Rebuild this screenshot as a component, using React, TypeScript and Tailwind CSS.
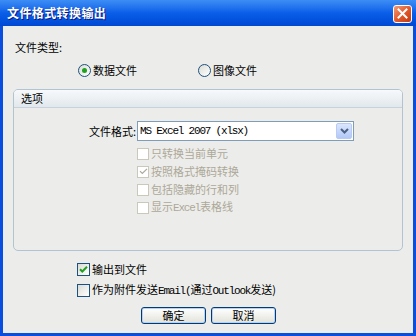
import React from "react";

const cjk = { fontFamily: '"Noto Sans CJK SC", "Noto Sans", sans-serif' };
const mono = { fontFamily: '"Liberation Mono", "Noto Sans CJK SC", monospace' };

function Radio({ checked, label }: { checked?: boolean; label: string }) {
  return (
    <div className="flex items-center gap-[2px]">
      <div className="w-[13px] h-[13px] rounded-full border border-[#1c5180] bg-gradient-to-br from-[#dcdcd5] to-white flex items-center justify-center">
        {checked && <div className="w-[5px] h-[5px] rounded-full bg-[#21a121]" />}
      </div>
      <span className="text-[11px] leading-[13px] text-black">{label}</span>
    </div>
  );
}

function Check({
  checked,
  disabled,
  children,
}: {
  checked?: boolean;
  disabled?: boolean;
  children: React.ReactNode;
}) {
  return (
    <div className="flex items-center gap-[2px] h-[13px]">
      <div
        className={
          disabled
            ? "w-[12px] h-[12px] border border-[#cac8bb] bg-white flex items-center justify-center"
            : "w-[13px] h-[13px] border border-[#1c5180] bg-gradient-to-br from-[#dcdcd5] to-white flex items-center justify-center"
        }
      >
        {checked && (
          <svg width="9" height="9" viewBox="0 0 9 9">
            <path
              d="M1 4.2 L3.3 6.5 L8 1.8"
              fill="none"
              stroke={disabled ? "#aca899" : "#21a121"}
              strokeWidth={disabled ? 1.2 : 2}
            />
          </svg>
        )}
      </div>
      <span className={disabled ? "text-[11px] leading-[13px] text-[#aca899]" : "text-[11px] leading-[13px] text-black"}>
        {children}
      </span>
    </div>
  );
}

function Btn({ label }: { label: string }) {
  return (
    <div className="w-[65px] h-[17px] rounded-[3px] border border-[#003c74] bg-gradient-to-b from-white to-[#e3e3db] shadow-[inset_0_0_0_1px_#b8d0f5] flex items-center justify-center text-[11px] leading-[13px] text-black">
      {label}
    </div>
  );
}

export default function App() {
  return (
    <div className="w-[416px] h-[336px] bg-[#0a4ee0] flex flex-col overflow-hidden" style={cjk}>
      {/* title bar */}
      <div className="h-[26px] shrink-0 flex items-center justify-between pl-[7px] pr-[4px] bg-gradient-to-b from-[#3d8df5] via-[#0a5ee8] to-[#0148d4]">
        <span className="text-white font-bold text-[12px] tracking-[0.4px] [text-shadow:1px_1px_#0a1883]">
          文件格式转换输出
        </span>
        <div className="w-[19px] h-[18px] mt-[1px] rounded-[3px] border border-white bg-gradient-to-br from-[#f29a74] via-[#e35a2a] to-[#c23b10] flex items-center justify-center">
          <svg width="11" height="11" viewBox="0 0 11 11">
            <path d="M1.5 1.5 L9.5 9.5 M9.5 1.5 L1.5 9.5" stroke="white" strokeWidth="2" strokeLinecap="square" />
          </svg>
        </div>
      </div>
      {/* body */}
      <div className="flex-1 mx-[3px] mb-[3px] bg-[#ecedea] flex flex-col">
        <div className="pl-[12px] pt-[15px] text-[11px] leading-[13px] text-black">文件类型:</div>
        <div className="flex mt-[10px] pl-[75px]">
          <div className="w-[120px]">
            <Radio checked label="数据文件" />
          </div>
          <Radio label="图像文件" />
        </div>
        {/* group box */}
        <div className="mx-[10px] mt-[12px] h-[162px] rounded-[5px] border border-[#b0c4d2] flex flex-col overflow-hidden">
          <div className="h-[18px] shrink-0 bg-gradient-to-b from-[#f7f9fb] to-[#e2e8ed] border-b border-[#c6d3dc] pl-[7px] flex items-center text-[11px] leading-[13px] text-black">
            选项
          </div>
          <div className="flex items-center mt-[13px] pl-[60px]">
            <span className="w-[63px] text-right text-[11px] leading-[13px] text-black pr-[1px]">文件格式:</span>
            <div className="w-[217px] h-[20px] border border-[#7f9db9] bg-white flex items-center justify-between pl-[2px] pr-[1px]">
              <span className="text-[11px] leading-[13px] tracking-[-1.2px] text-black" style={mono}>
                MS Excel 2007 (xlsx)
              </span>
              <div className="w-[16px] h-[16px] rounded-[2px] border border-[#b9cbf3] bg-gradient-to-b from-[#dbe6fd] to-[#b3c8f7] flex items-center justify-center">
                <svg width="9" height="6" viewBox="0 0 9 6">
                  <path d="M1 1 L4.5 4.5 L8 1" fill="none" stroke="#4d6185" strokeWidth="2" />
                </svg>
              </div>
            </div>
          </div>
          <div className="flex flex-col gap-[5px] pl-[123px] mt-[6px]">
            <Check disabled>只转换当前单元</Check>
            <Check disabled checked>
              按照格式掩码转换
            </Check>
            <Check disabled>包括隐藏的行和列</Check>
            <Check disabled>
              显示<span style={mono} className="tracking-[-1.2px]">Excel</span>表格线
            </Check>
          </div>
        </div>
        <div className="flex flex-col gap-[8px] pl-[74px] mt-[12px]">
          <Check checked>输出到文件</Check>
          <Check>
            作为附件发送<span style={mono} className="tracking-[-1.2px]">Email(</span>通过
            <span style={mono} className="tracking-[-1.2px]">Outlook</span>发送)
          </Check>
        </div>
        <div className="flex gap-[5px] pl-[138px] mt-[10px]">
          <Btn label="确定" />
          <Btn label="取消" />
        </div>
      </div>
    </div>
  );
}
